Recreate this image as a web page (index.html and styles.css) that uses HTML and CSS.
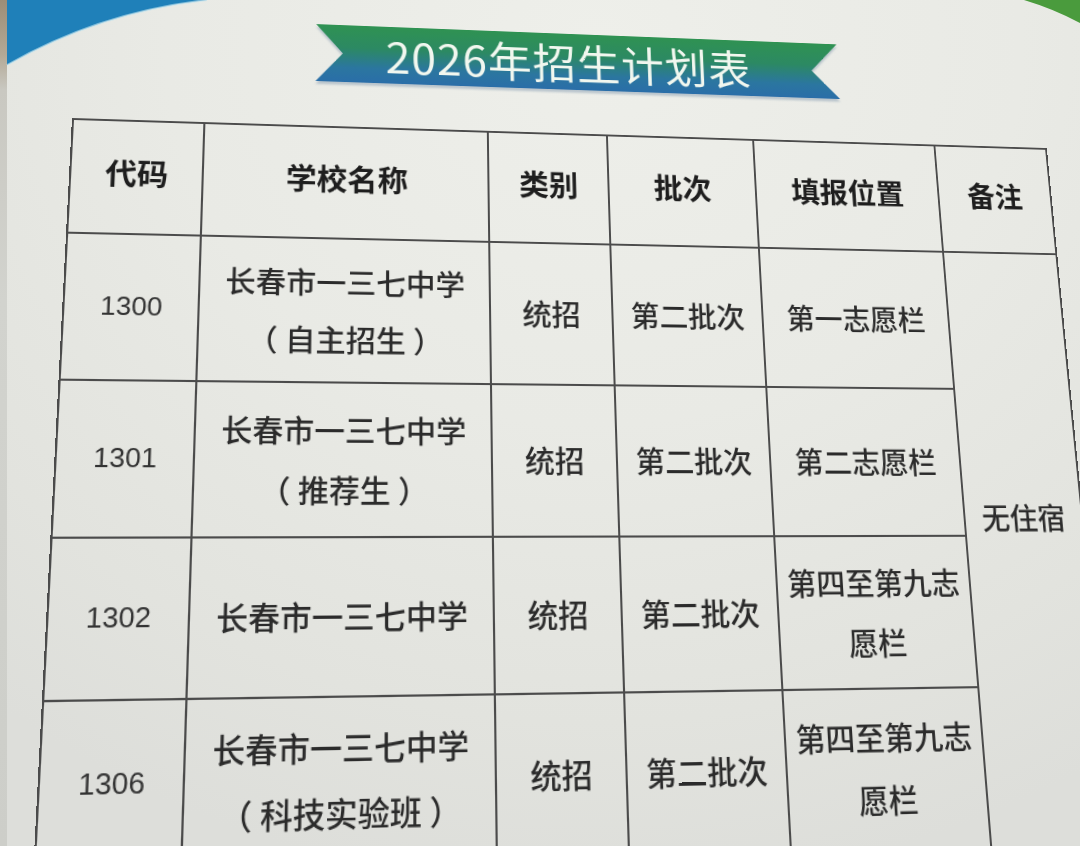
FILE: index.html
```html
<!DOCTYPE html>
<html lang="zh-CN">
<head>
<meta charset="utf-8">
<title>2026年招生计划表</title>
<link rel="stylesheet" href="styles.css">
</head>
<body>
<div class="strip"></div>
<svg class="corner-blue" width="210" height="70" viewBox="0 0 210 70"><path d="M7 0 H207 Q100 12 7 65 Z" fill="#1f80b9"/><path d="M207 0 Q100 12 7 65" fill="none" stroke="#bfe3ee" stroke-width="2" opacity="0.6"/></svg>
<svg class="corner-green" width="60" height="30" viewBox="0 0 60 30"><path d="M4 0 H60 V23 Q34 9 4 0 Z" fill="#4a9b3d"/></svg>
<div class="paper">
  <div class="banner-wrap"><div class="banner">2026年招生计划表</div></div>
  <table class="plan">
    <colgroup>
      <col class="c1"><col class="c2"><col class="c3"><col class="c4"><col class="c5"><col class="c6">
    </colgroup>
    <tr class="r-head">
      <th>代码</th><th>学校名称</th><th>类别</th><th>批次</th><th>填报位置</th><th>备注</th>
    </tr>
    <tr class="r1">
      <td class="code">1300</td>
      <td>长春市一三七中学<br><span class="paren open">（</span>自主招生<span class="paren close">）</span></td>
      <td>统招</td>
      <td>第二批次</td>
      <td>第一志愿栏</td>
      <td class="remark" rowspan="4">无住宿</td>
    </tr>
    <tr class="r2">
      <td class="code">1301</td>
      <td>长春市一三七中学<br><span class="paren open">（</span>推荐生<span class="paren close">）</span></td>
      <td>统招</td>
      <td>第二批次</td>
      <td>第二志愿栏</td>
    </tr>
    <tr class="r3">
      <td class="code">1302</td>
      <td>长春市一三七中学</td>
      <td>统招</td>
      <td>第二批次</td>
      <td>第四至第九志<br>愿栏</td>
    </tr>
    <tr class="r4">
      <td class="code">1306</td>
      <td>长春市一三七中学<br><span class="paren open">（</span>科技实验班<span class="paren close">）</span></td>
      <td>统招</td>
      <td>第二批次</td>
      <td>第四至第九志<br>愿栏</td>
    </tr>
  </table>
</div>
</body>
</html>
```
FILE: styles.css
```css
html, body {
  margin: 0;
  padding: 0;
  width: 1080px;
  height: 846px;
  overflow: hidden;
}
body {
  position: relative;
  background: radial-gradient(ellipse 950px 850px at 55% 5%, #eeefea 0%, #e9eae5 45%, #e2e3de 80%, #dddeda 100%);
  font-family: "Noto Sans CJK SC", sans-serif;
  color: #2a2a2a;
}
.strip {
  position: absolute;
  left: 0;
  top: 0;
  width: 7px;
  height: 846px;
  background: linear-gradient(180deg, #9c8d77 0px, #b3a996 55px, #c9c8c1 90px, #d2d3ce 300px, #cdcec9 846px);
}
.corner-blue {
  position: absolute;
  left: 0;
  top: 0;
}
.corner-green {
  position: absolute;
  right: 0;
  top: 0;
}
.paper {
  width: 1000px;
  padding-top: 22px;
  transform-origin: 0 0;
  transform: matrix3d(1.059531, 0.042255, 0, 0.000082805, -0.0608291, 0.953460, 0, -0.000149602, 0, 0, 1, 0, 79.9078, -5.9498, 0, 1.0194483);
}
.banner-wrap {
  margin-left: 235px;
  width: 544px;
  filter: drop-shadow(0 3px 1px rgba(150, 168, 185, 0.6));
}
.banner {
  height: 61px;
  box-sizing: border-box;
  padding-right: 24px;
  clip-path: polygon(0 0, 100% 0, calc(100% - 29px) 50%, 100% 100%, 0 100%, 27px 50%);
  background: linear-gradient(180deg, #2f9252 0%, #2c8963 40%, #2b76a0 75%, #2a6ea8 100%);
  color: #f1f7ef;
  font-size: 45px;
  letter-spacing: 1px;
  line-height: 61px;
  text-align: center;
  white-space: nowrap;
}
.plan {
  margin-top: 47px;
  width: 1000px;
  border-collapse: collapse;
  table-layout: fixed;
}
.c1 { width: 126px; }
.c2 { width: 281px; }
.c3 { width: 122px; }
.c4 { width: 153px; }
.c5 { width: 195px; }
.c6 { width: 123px; }
.plan th,
.plan td {
  border: 2px solid #4b4b4b;
  padding: 0;
  text-align: center;
  vertical-align: middle;
  font-size: 29px;
  line-height: 57px;
  font-weight: 500;
  color: #2b2b2b;
}
.paren {
  display: inline-block;
  width: 29px;
  text-align: left;
  white-space: nowrap;
}
.paren.open { text-indent: -7px; }
.paren.close { text-indent: 7px; }
.plan th {
  font-size: 30px;
  font-weight: 700;
  color: #1e1e1e;
  padding-bottom: 10px;
}
.r-head { height: 115px; }
.r1 { height: 143px; }
.r2 { height: 147px; }
.r3 { height: 145px; }
.r4 { height: 160px; }
.r4 td { padding-bottom: 15px; }
.plan td.code {
  font-family: "Liberation Sans", Arial, sans-serif;
  font-size: 26px;
  font-weight: 400;
  color: #333333;
}
.plan td.remark {
  vertical-align: top;
  padding-top: 250px;
  line-height: 40px;
}
```
